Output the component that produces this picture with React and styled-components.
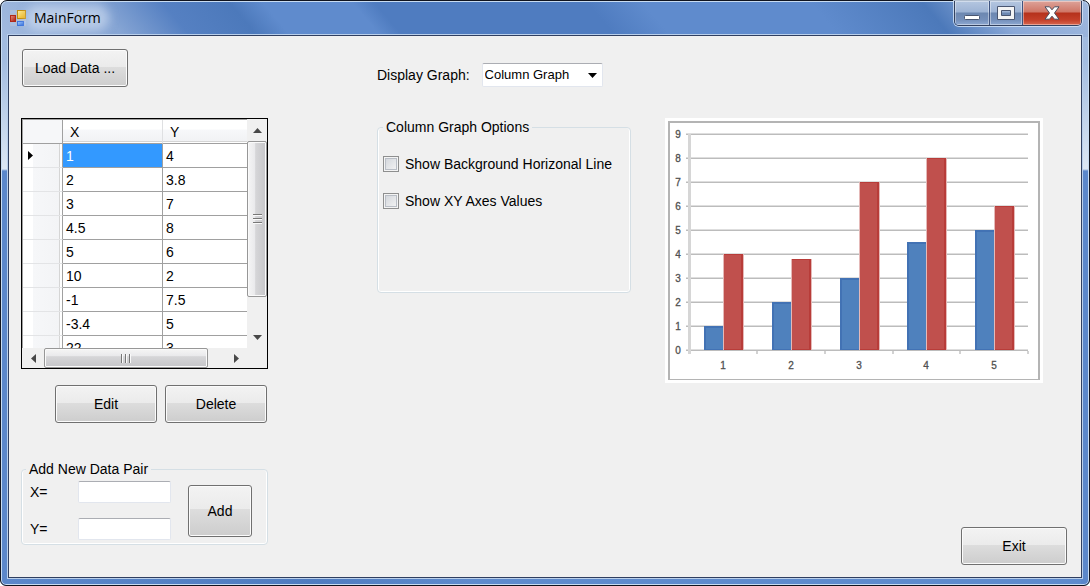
import React, { useState } from "react";
import styled, { createGlobalStyle, css } from "styled-components";

const Global = createGlobalStyle`
  *, *::before, *::after { box-sizing: border-box; }
  body { margin: 0; background: #fff; font: 14px/20px "Liberation Sans", Arial, sans-serif; color: #000; }
  button, input, select { font: inherit; color: inherit; margin: 0; }
`;

const glassEdge = "linear-gradient(180deg, #a0b9de 0, #a3bce0 60px, #dce7f4 168px, #5b87ca 170px, #5b87ca 100%)";

const Window = styled.div`
  min-height: 100vh;
  display: flex;
  flex-direction: column;
  padding: 0 7px 7px;
  border: 1px solid #10141f;
  border-radius: 7px 7px 6px 6px;
  box-shadow: inset 0 0 0 1px #c8dcf2;
  background:
    linear-gradient(50deg, #a3bbdf 0, #86a5d4 11%, #5580c2 17%, #4c79bb 23%, #5f8bcd 26%, #5f8bcd 34%, #4f7cc0 36%, #4f7cc0 55%, #5f8bcd 60%, #5f8bcd 75%, #4c79ba 85%, #8aa8d7 91%, #a0b9de 100%) top / 100% 36px no-repeat,
    ${glassEdge} left / 8px 100% no-repeat,
    ${glassEdge} right / 8px 100% no-repeat,
    linear-gradient(50deg, #5b87ca 0, #4f7cc0 20%, #5f8bcd 30%, #5f8bcd 80%, #4f7cc0 90%, #5b87ca 100%);
`;

const TitleBar = styled.header`
  display: flex;
  align-items: flex-start;
  height: 34px;
  padding-left: 2px;
`;

const Caption = styled.h1`
  flex: 1;
  display: flex;
  align-items: center;
  height: 34px;
  margin: 0;
  font: 14px/20px "Open Sans", sans-serif;

  svg { margin-right: 8px; }
  span {
    border-radius: 6px;
    background: rgba(225, 236, 250, 0.5);
    box-shadow: 0 0 10px 8px rgba(225, 236, 250, 0.5);
    line-height: 10px;
  }
`;

const CaptionButtons = styled.div`
  display: flex;
  height: 25px;
  border: 1px solid #33415f;
  border-top: 0;
  border-radius: 0 0 5px 5px;
  box-shadow: 0 0 0 1px rgba(215, 230, 248, 0.8);
  overflow: hidden;
`;

const CaptionButton = styled.button`
  display: grid;
  place-items: center;
  width: ${(p) => p.$width}px;
  padding: 0;
  border: 0;
  border-right: ${(p) => (p.$close ? 0 : 1)}px solid #3f5480;
  box-shadow: inset 0 0 0 1px rgba(255, 255, 255, 0.4);
  background: ${(p) =>
    p.$close
      ? "linear-gradient(#dda399 0, #cf7667 11px, #b5311c 12px, #c4402a 19px, #d8674f 100%)"
      : "linear-gradient(#b4c6e0 0, #9db3d4 11px, #6c87b0 12px, #7590bb 19px, #8ea9d2 100%)"};
`;

const Client = styled.main`
  flex: 1;
  display: flex;
  padding: 13px 14px 12px 12px;
  border: 1px solid #303f60;
  box-shadow: 0 0 0 1px #b9cfeb;
  background: #f0f0f0;
`;

const DataColumn = styled.section`
  display: flex;
  flex-direction: column;
  align-items: flex-start;
  flex: 0 0 247px;
`;

const OptionsColumn = styled.section`
  flex: 0 0 254px;
  margin: 14px 34px 0 109px;
`;

const GraphColumn = styled.section`
  flex: 1;
  display: flex;
  flex-direction: column;
  justify-content: space-between;
  padding-top: 69px;
`;

const Button = styled.button`
  width: ${(p) => p.$width}px;
  height: ${(p) => p.$height || 38}px;
  padding: 0;
  border: 1px solid #707070;
  border-radius: 3px;
  box-shadow: inset 0 0 0 1px #fbfbfb;
  background: linear-gradient(#f3f3f3 0, #ebebeb 46%, #dddddd 47%, #cdcdcd 100%);
`;

const LoadButton = styled(Button)`
  margin: 0 1px 31px;
`;

const ExitButton = styled(Button)`
  align-self: flex-end;
`;

const GridFrame = styled.div`
  display: grid;
  grid-template-columns: 1fr 20px;
  grid-template-rows: 229px 20px;
  width: 100%;
  border: 1px solid #000;
  margin-bottom: 16px;
`;

const GridView = styled.div`
  overflow: hidden;
  border-top: 1px solid #a0a0a0;
  border-left: 1px solid #a0a0a0;
`;

const Table = styled.table`
  table-layout: fixed;
  width: 240px;
  border-collapse: separate;
  border-spacing: 0;
`;

const cell = css`
  height: 24px;
  padding: 0 4px;
  border-right: 1px solid #a0a0a0;
  border-bottom: 1px solid #a0a0a0;
  text-align: left;
  font-weight: 400;
  line-height: 20px;
`;

const Cell = styled.td`
  ${cell}
  padding-left: 3px;
  background: ${(p) => (p.$selected ? "#3399ff" : "#fff")};
  color: ${(p) => (p.$selected ? "#fff" : "#000")};
`;

const ColumnHead = styled.th`
  ${cell}
  padding-left: 7px;
  border-right-color: #dfe0e2;
  background: linear-gradient(#fff 0, #fff 9px, #f7f8fa 10px, #f1f2f4 21px, #d5d5d5 21px, #d5d5d5 22px, #fff 22px);
`;

const CornerHead = styled.th`
  ${cell}
  width: 40px;
  background: #f6f7f9;
`;

const RowHead = styled.th`
  ${cell}
  padding-left: 5px;
  border-bottom-color: #e3e4e6;
  background: linear-gradient(90deg, #fff 0, #fff 10px, #f6f7f9 10px, #f3f4f6 36px, #d5d5d5 36px, #d5d5d5 37px, #fff 37px);
  svg { display: block; }
`;

const ScrollBar = styled.div`
  display: flex;
  flex-direction: ${(p) => (p.$vertical ? "column" : "row")};
  background: #f0f0f0;
`;

const ScrollArrow = styled.button`
  flex: 0 0 22px;
  display: grid;
  place-items: center;
  padding: 0;
  border: 0;
  background: transparent;
`;

const ScrollTrack = styled.div`
  flex: 1;
  display: flex;
  flex-direction: ${(p) => (p.$vertical ? "column" : "row")};
`;

const ScrollThumb = styled.div`
  flex: 0 0 ${(p) => p.$size}px;
  display: grid;
  place-items: center;
  border: 1px solid #979797;
  border-radius: 2px;
  box-shadow: inset 0 0 0 1px #fafafa;
  background: linear-gradient(${(p) => (p.$vertical ? "90deg" : "180deg")}, #f5f5f5 0, #e9e9eb 40%, #d6d6d8 42%, #c6c6c9 100%);
`;

const EditRow = styled.div`
  align-self: flex-end;
  display: flex;
  gap: 8px;
  margin-right: 1px;
`;

const Group = styled.fieldset`
  min-width: 0;
  margin: 0;
  border: 1px solid #d5dfe5;
  border-radius: 4px;
  box-shadow: inset 0 -1px 0 #fff, inset 1px 0 0 #fff, inset -1px 0 0 #fff;
`;

const Legend = styled.legend`
  padding: 0 3px;
  background: #f0f0f0;
`;

const PairGroup = styled(Group)`
  display: flex;
  justify-content: space-between;
  width: 100%;
  margin-top: 36px;
  padding: 2px 15px 4px 4px;
`;

const PairFields = styled.div`
  display: grid;
  gap: 15px;
`;

const PairLabel = styled.label`
  display: flex;
  align-items: center;
  padding-left: 4px;
  span { width: 48px; }
`;

const inset = css`
  border: 1px solid #e2e6ee;
  border-top-color: #abadb3;
  border-radius: 2px;
  background-color: #fff;
`;

const TextBox = styled.input`
  ${inset}
  width: 93px;
  height: 22px;
  padding: 0 4px;
`;

const AddButton = styled(Button)`
  margin-top: 4px;
`;

const GraphPicker = styled.div`
  display: flex;
  align-items: center;
  gap: 12px;
  margin-bottom: 30px;
`;

const SelectBox = styled.span`
  ${inset}
  display: flex;
  align-items: center;
  width: 121px;
  height: 24px;
  padding-right: 5px;
`;

const Select = styled.select`
  appearance: none;
  flex: 1;
  min-width: 0;
  height: 22px;
  padding: 0 2px;
  border: 0;
  outline: 0;
  background: transparent;
  font-size: 13px;
`;

const OptionsGroup = styled(Group)`
  display: flex;
  flex-direction: column;
  gap: 17px;
  height: 176px;
  padding: 17px 5px 0;
`;

const CheckLabel = styled.label`
  display: flex;
  align-items: center;
  gap: 6px;
  white-space: nowrap;
`;

const CheckBox = styled.input`
  appearance: none;
  width: 16px;
  height: 16px;
  margin: 0;
  border: 1px solid #8e8f8f;
  box-shadow: inset 0 0 0 1px #f4f4f4, inset 0 0 0 2px #b9bec6;
  background: linear-gradient(135deg, #cfd3d9, #f6f6f6);
  &:checked { background: #4a6a9c; }
`;

const ChartFrame = styled.div`
  align-self: flex-start;
  width: 100%;
  max-width: 378px;
  padding: 3px;
  background: #fff;
  svg { display: block; width: 100%; height: auto; }
`;

const pairs = [
  ["1", "4"], ["2", "3.8"], ["3", "7"], ["4.5", "8"], ["5", "6"],
  ["10", "2"], ["-1", "7.5"], ["-3.4", "5"], ["22", "3"],
];

function Arrow({ points, size = [9, 9], fill = "#484848" }) {
  return (
    <svg width={size[0]} height={size[1]} viewBox={`0 0 ${size[0]} ${size[1]}`} aria-hidden="true">
      <polygon points={points} fill={fill} />
    </svg>
  );
}

function Grip({ vertical }) {
  return (
    <svg width="11" height="11" viewBox="0 0 11 11" shapeRendering="crispEdges" aria-hidden="true">
      <g transform={vertical ? "" : "rotate(-90 5.5 5.5)"}>
        {[0, 4, 8].map((y) => (
          <g key={y}>
            <rect x="1" y={y} width="9" height="1" fill="#777" />
            <rect x="1" y={y + 1} width="9" height="1" fill="#fafafa" />
          </g>
        ))}
      </g>
    </svg>
  );
}

function AppIcon() {
  return (
    <svg width="16" height="16" viewBox="0 0 16 16" aria-hidden="true">
      <defs>
        <linearGradient id="gold" x2="1" y2="1"><stop stopColor="#fff0a0" /><stop offset="1" stopColor="#e8a800" /></linearGradient>
        <linearGradient id="red" x2="1" y2="1"><stop stopColor="#e89080" /><stop offset="1" stopColor="#a81808" /></linearGradient>
        <linearGradient id="blue" x2="1" y2="1"><stop stopColor="#a8d0ff" /><stop offset="1" stopColor="#2864d8" /></linearGradient>
      </defs>
      <path d="M0 0h16v16H0z" fill="#b9bfca" opacity=".8" />
      <path d="M.5.5h5v3h-5zM.5 12.500h5v3h-5zM14 11h2v4h-2z" fill="#a8bfe4" />
      <rect x=".5" y="5.500" width="5" height="6" fill="url(#red)" stroke="#b02818" />
      <rect x="7.500" y=".5" width="8" height="8" fill="url(#gold)" stroke="#c08a08" />
      <rect x="7.500" y="11.500" width="6" height="4" fill="url(#blue)" stroke="#3c74dc" />
    </svg>
  );
}

const chartPairs = [[1, 4], [2, 3.8], [3, 7], [4.5, 8], [5, 6]];

function Chart() {
  const base = 229;
  const unit = 24;
  return (
    <svg viewBox="0 0 372 259" role="img" aria-label="Column graph">
      <rect x="0" y="0" width="372" height="259" fill="#b4b4b4" />
      <rect x="2" y="2" width="368" height="256" fill="#fff" />
      <g shapeRendering="crispEdges">
        {Array.from({ length: 10 }, (_, n) => {
          const y = base - n * unit;
          return (
            <g key={n}>
              <rect x="18" y={y - 1} width="342" height="1" fill="#dedede" />
              <rect x="18" y={y} width="342" height="1" fill="#bcbcbc" />
            </g>
          );
        })}
        <rect x="20" y="13" width="3" height="220" fill="#d6d6d6" />
        {[88, 156, 224, 291, 359].map((x) => (
          <rect key={x} x={x} y="230" width="2" height="3" fill="#d2d2d2" />
        ))}
        {chartPairs.map(([a, b], i) => {
          const x = 36 + Math.round(i * 67.8);
          const ah = Math.round(a * unit);
          const bh = Math.round(b * unit);
          return (
            <g key={i}>
              <rect x={x} y={base - ah} width="20" height={ah} fill="#4272b4" />
              <rect x={x + 2} y={base - ah + 2} width="18" height={ah - 3} fill="#4f81bd" />
              <rect x={x + 19} y={base - bh} width="21" height={bh} fill="#e5b9b8" />
              <rect x={x + 20} y={base - bh} width="19" height={bh} fill="#b83c39" />
              <rect x={x + 20} y={base - bh + 1} width="17" height={bh - 2} fill="#c0504d" />
            </g>
          );
        })}
      </g>
      <g fontFamily="Liberation Sans, sans-serif" fontSize="10" fill="#505050" stroke="#505050" strokeWidth=".3" textAnchor="middle">
        {Array.from({ length: 10 }, (_, n) => (
          <text key={n} x="10" y={base - n * unit + 4}>{n}</text>
        ))}
        {chartPairs.map((_, i) => (
          <text key={i} x={55 + Math.round(i * 67.8)} y="248">{i + 1}</text>
        ))}
      </g>
    </svg>
  );
}

export default function App() {
  const [graph, setGraph] = useState("Column Graph");
  return (
    <>
      <Global />
      <Window>
        <TitleBar>
          <Caption><AppIcon /><span>MainForm</span></Caption>
          <CaptionButtons>
            <CaptionButton $width={35} aria-label="Minimize">
              <svg width="18" height="18"><rect x="1.500" y="11.500" width="15" height="4" rx="1" fill="#fff" stroke="#4a5670" /></svg>
            </CaptionButton>
            <CaptionButton $width={33} aria-label="Maximize">
              <svg width="18" height="14"><path fillRule="evenodd" d="M.5.5h17v13H.5zM4.500 4.500v5h9v-5z" fill="#f4f4f4" stroke="#4a5670" /></svg>
            </CaptionButton>
            <CaptionButton $width={58} $close aria-label="Close">
              <svg width="16" height="14"><path d="M1 .8h4.500L8 3.800 10.500.8H15L10.500 7l4.500 6.200h-4.500L8 10.200l-2.500 3H1L5.500 7z" fill="#fff" stroke="#4a4d5e" strokeLinejoin="round" /></svg>
            </CaptionButton>
          </CaptionButtons>
        </TitleBar>
        <Client>
          <DataColumn>
            <LoadButton $width={106}>Load Data ...</LoadButton>
            <GridFrame>
              <GridView>
                <Table>
                  <thead>
                    <tr><CornerHead aria-label="Row" /><ColumnHead>X</ColumnHead><ColumnHead>Y</ColumnHead></tr>
                  </thead>
                  <tbody>
                    {pairs.map(([x, y], i) => (
                      <tr key={i}>
                        <RowHead>{i === 0 && <Arrow points="0,0 5,4.500 0,9" size={[5, 9]} fill="#000" />}</RowHead>
                        <Cell $selected={i === 0}>{x}</Cell>
                        <Cell>{y}</Cell>
                      </tr>
                    ))}
                  </tbody>
                </Table>
              </GridView>
              <ScrollBar $vertical>
                <ScrollArrow aria-label="Scroll up"><Arrow points="0,7 4.500,2 9,7" /></ScrollArrow>
                <ScrollTrack $vertical><ScrollThumb $vertical $size={156}><Grip vertical /></ScrollThumb></ScrollTrack>
                <ScrollArrow aria-label="Scroll down"><Arrow points="0,2 4.500,7 9,2" /></ScrollArrow>
              </ScrollBar>
              <ScrollBar>
                <ScrollArrow aria-label="Scroll left"><Arrow points="7,0 2,4.500 7,9" /></ScrollArrow>
                <ScrollTrack><ScrollThumb $size={164}><Grip /></ScrollThumb></ScrollTrack>
                <ScrollArrow aria-label="Scroll right"><Arrow points="2,0 7,4.500 2,9" /></ScrollArrow>
              </ScrollBar>
            </GridFrame>
            <EditRow>
              <Button $width={102}>Edit</Button>
              <Button $width={102}>Delete</Button>
            </EditRow>
            <PairGroup>
              <Legend>Add New Data Pair</Legend>
              <PairFields>
                <PairLabel><span>X=</span><TextBox /></PairLabel>
                <PairLabel><span>Y=</span><TextBox /></PairLabel>
              </PairFields>
              <AddButton $width={64} $height={52}>Add</AddButton>
            </PairGroup>
          </DataColumn>
          <OptionsColumn>
            <GraphPicker>
              <label htmlFor="graph">Display Graph:</label>
              <SelectBox>
                <Select id="graph" value={graph} onChange={(e) => setGraph(e.target.value)}>
                  <option>Column Graph</option>
                </Select>
                <Arrow points="0,0 9,0 4.500,5" size={[9, 5]} fill="#000" />
              </SelectBox>
            </GraphPicker>
            <OptionsGroup>
              <Legend>Column Graph Options</Legend>
              <CheckLabel><CheckBox type="checkbox" />Show Background Horizonal Line</CheckLabel>
              <CheckLabel><CheckBox type="checkbox" />Show XY Axes Values</CheckLabel>
            </OptionsGroup>
          </OptionsColumn>
          <GraphColumn>
            <ChartFrame><Chart /></ChartFrame>
            <ExitButton $width={106}>Exit</ExitButton>
          </GraphColumn>
        </Client>
      </Window>
    </>
  );
}
